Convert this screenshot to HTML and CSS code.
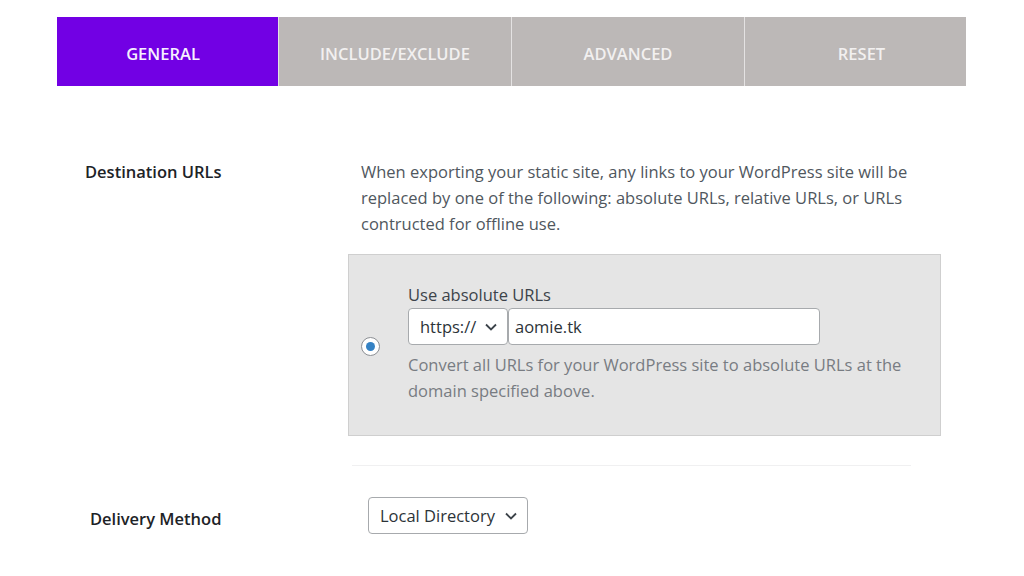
FILE: index.html
```html
<!DOCTYPE html>
<html lang="en">
<head>
<meta charset="utf-8">
<title>Settings</title>
<link rel="stylesheet" href="styles.css">
</head>
<body>
<nav class="tabs">
  <a class="tab active">GENERAL</a>
  <a class="tab">INCLUDE/EXCLUDE</a>
  <a class="tab">ADVANCED</a>
  <a class="tab tab-last">RESET</a>
</nav>

<section class="row row-dest">
  <div class="label">Destination URLs</div>
  <div class="field">
    <p class="desc">When exporting your static site, any links to your WordPress site will be replaced by one of the following: absolute URLs, relative URLs, or URLs contructed for offline use.</p>
    <div class="option-box">
      <span class="radio"><span class="dot"></span></span>
      <div class="option-body">
        <div class="option-title">Use absolute URLs</div>
        <div class="url-inputs">
          <div class="select proto">https://<svg class="chev" viewBox="0 0 12 8" width="12" height="8"><path d="M1 1.5 6 6.5 11 1.5" fill="none" stroke="#3c434a" stroke-width="1.8"/></svg></div>
          <div class="input host">aomie.tk</div>
        </div>
        <p class="option-desc">Convert all URLs for your WordPress site to absolute URLs at the domain specified above.</p>
      </div>
    </div>
  </div>
</section>

<hr class="sep">

<section class="row row-delivery">
  <div class="label">Delivery Method</div>
  <div class="field">
    <div class="select delivery">Local Directory<svg class="chev" viewBox="0 0 12 8" width="12" height="8"><path d="M1 1.5 6 6.5 11 1.5" fill="none" stroke="#3c434a" stroke-width="1.8"/></svg></div>
  </div>
</section>
</body>
</html>
```

FILE: styles.css
```css
* { box-sizing: border-box; }
body {
  margin: 0;
  background: #fff;
  font-family: "Open Sans", "Noto Sans", sans-serif;
  font-size: 16.5px;
  color: #1d2327;
}
.tabs {
  display: grid;
  grid-template-columns: 221px 233px 233px 222px;
  margin: 17px 0 0 57px;
  width: 909px;
  height: 69px;
}
.tab {
  display: flex;
  align-items: center;
  justify-content: center;
  padding-top: 3px;
  background: #bcb8b7;
  color: #f2f0f0;
  font-weight: 600;
  font-size: 16.5px;
  border-left: 1px solid #e4e2e2;
}
.tab.active {
  background: #7200e4;
  color: #f6f0ff;
  border-left: none;
  padding-right: 9px;
}
.tab.tab-last {
  padding-left: 12px;
}
.row {
  display: flex;
}
.row-dest {
  margin-top: 73px;
  padding-left: 85px;
}
.label {
  font-weight: 600;
  font-size: 16.5px;
  color: #1d2327;
}
.row-dest .label {
  width: 276px;
  line-height: 26px;
}
.desc {
  margin: 0;
  width: 560px;
  line-height: 26px;
  color: #50575e;
}
.option-box {
  margin: 17px 0 0 -13px;
  width: 593px;
  height: 182px;
  background: #e5e5e5;
  border: 1px solid #cfcfcf;
  display: flex;
  align-items: center;
  padding: 0 0 4px 12px;
}
.radio {
  width: 19px;
  height: 19px;
  border-radius: 50%;
  border: 1px solid #8c8f94;
  background: #fff;
  display: flex;
  align-items: center;
  justify-content: center;
  margin: 6px 28px 0 0;
  flex: none;
}
.dot {
  width: 9px;
  height: 9px;
  border-radius: 50%;
  background: #3582c4;
}
.option-title {
  line-height: 26px;
  color: #3c434a;
}
.url-inputs {
  display: flex;
}
.select, .input {
  height: 37px;
  background: #fff;
  border: 1px solid #a7aaad;
  border-radius: 4px;
  display: flex;
  align-items: center;
  color: #2c3338;
}
.proto {
  width: 100px;
  padding: 0 10px 0 11px;
  justify-content: space-between;
}
.host {
  width: 312px;
  padding: 0 6px;
}
.option-desc {
  margin: 7px 0 0;
  width: 510px;
  line-height: 26px;
  color: #787c82;
}
.sep {
  margin: 29px 0 0 352px;
  width: 559px;
  border: none;
  border-top: 1px solid #f0f0f1;
}
.row-delivery {
  margin-top: 31px;
  padding-left: 90px;
  align-items: center;
}
.row-delivery .label {
  width: 278px;
  padding-top: 5px;
}
.delivery {
  width: 160px;
  height: 37px;
  padding: 0 10px 0 11px;
  justify-content: space-between;
}
.chev { flex: none; }
```
